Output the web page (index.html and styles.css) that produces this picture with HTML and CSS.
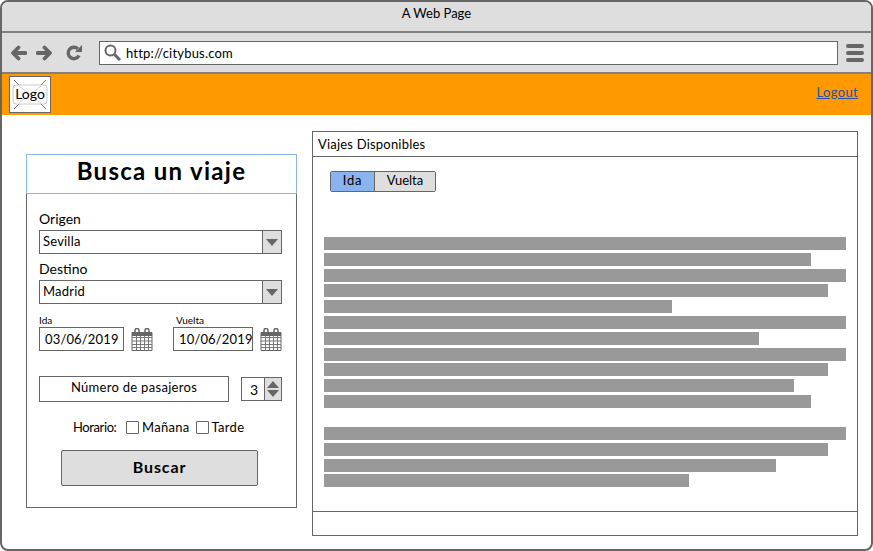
FILE: index.html
```html
<!DOCTYPE html>
<html lang="es">
<head>
  <meta charset="UTF-8" />
  <title>A Web Page</title>
  <link rel="stylesheet" href="styles.css">
</head>
<body>
  <div class="window">
    <div class="titlebar">A Web Page</div>
    <div class="toolbar">
      <svg class="nav-icon" width="16" height="16" viewBox="0 0 16 16"><path d="M7.500 2.500 2 8l5.500 5.500M2.500 8h12" fill="none" stroke="#666" stroke-width="3.800" stroke-linecap="round" stroke-linejoin="round"/></svg>
      <svg class="nav-icon" width="16" height="16" viewBox="0 0 16 16"><path d="M8.500 2.500 14 8l-5.500 5.500M13.500 8h-12" fill="none" stroke="#666" stroke-width="3.800" stroke-linecap="round" stroke-linejoin="round"/></svg>
      <svg class="nav-icon reload" width="16" height="16" viewBox="0 0 16 16"><path d="M13 10.500A5.700 5.700 0 1 1 11.800 3.800" fill="none" stroke="#666" stroke-width="3.400"/><path d="M9 7h7V0z" fill="#666"/></svg>
      <div class="address">
        <svg width="17" height="17" viewBox="0 0 17 17"><circle cx="6.500" cy="6.500" r="5" fill="none" stroke="#666" stroke-width="2"/><path d="M10.500 10.500 16 16" stroke="#666" stroke-width="3"/></svg>
        <span>http://citybus.com</span>
      </div>
      <div class="burger"><i></i><i></i><i></i></div>
    </div>
    <header class="topbar">
      <div class="logo">
        <svg class="logo-x" width="40" height="35" viewBox="0 0 40 35"><rect x="3" y="8" width="34" height="19" rx="3" fill="none" stroke="#ccc"/><path d="M9 9 31 26M31 9 9 26" stroke="#ccc"/><path d="M4 3 9 8M36 3 31 8M4 32 9 27M36 32 31 27" stroke="#777"/></svg>
        <span>Logo</span>
      </div>
      <a class="logout" href="#">Logout</a>
    </header>
    <main class="content">
      <section class="search">
        <h1>Busca un viaje</h1>
        <form class="search-form">
          <label class="field-label">Origen</label>
          <div class="select"><span>Sevilla</span><b></b></div>
          <label class="field-label second">Destino</label>
          <div class="select"><span>Madrid</span><b></b></div>
          <div class="dates">
            <div class="date">
              <small>Ida</small>
              <div class="date-row">
                <div class="date-input first">03/06/2019</div>
                <svg class="calendar" width="22" height="23" viewBox="0 0 22 23"><use href="#cal"/></svg>
              </div>
            </div>
            <div class="date">
              <small class="shifted">Vuelta</small>
              <div class="date-row">
                <div class="date-input">10/06/2019</div>
                <svg class="calendar" width="22" height="23" viewBox="0 0 22 23"><use href="#cal"/></svg>
              </div>
            </div>
          </div>
          <div class="passengers">
            <div class="passengers-label">Número de pasajeros</div>
            <div class="spinner"><span>3</span><b><i class="up"></i><i class="down"></i></b></div>
          </div>
          <div class="schedule">
            <span class="schedule-label">Horario:</span>
            <label><i class="check"></i>Mañana</label>
            <label><i class="check"></i>Tarde</label>
          </div>
          <button type="button" class="search-btn">Buscar</button>
        </form>
      </section>
      <section class="trips">
        <div class="trips-head">Viajes Disponibles</div>
        <div class="trips-body">
          <div class="tabs"><span class="tab active">Ida</span><span class="tab">Vuelta</span></div>
          <div class="lines">
            <p style="width:100%"></p><p style="width:93.300%"></p><p style="width:100%"></p><p style="width:96.600%"></p><p style="width:66.700%"></p><p style="width:100%"></p><p style="width:83.300%"></p><p style="width:100%"></p><p style="width:96.600%"></p><p style="width:90%"></p><p style="width:93.300%"></p>
          </div>
          <div class="lines">
            <p style="width:100%"></p><p style="width:96.600%"></p><p style="width:86.600%"></p><p style="width:70%"></p>
          </div>
        </div>
        <div class="trips-foot"></div>
      </section>
    </main>
  </div>
  <svg width="0" height="0" class="defs"><defs><g id="cal"><path d="M1 4.500h20v18H1z" fill="#fff" stroke="#666"/><path d="M1 9.500h20M1 13h20M1 16.500h20M1 19.500h20M5.500 4.500v18M9.500 4.500v18M13.500 4.500v18M17.500 4.500v18" stroke="#777" fill="none"/><path d="M4 6V2.500a2 2 0 0 1 4 0V6M14 6V2.500a2 2 0 0 1 4 0V6" fill="none" stroke="#666" stroke-width="1.500"/><path d="M1 6.500h20" stroke="#666" stroke-width="3"/></g></defs></svg>
</body>
</html>
```

FILE: styles.css
```css
* {
  box-sizing: border-box;
}

body {
  margin: 0;
  background-color: #fff;
  color: #000;
  font-family: "Lato", "Open Sans", sans-serif;
  font-size: 13px;
}

.defs {
  display: block;
  height: 0;
}

.window {
  width: 873px;
  height: 551px;
  border: 2px solid #666;
  border-radius: 8px;
  overflow: hidden;
}

.titlebar {
  height: 31px;
  background-color: #dedede;
  border-bottom: 2px solid #808080;
  text-align: center;
  font-size: 13px;
  line-height: 23px;
}

.toolbar {
  height: 41px;
  background-color: #dedede;
  border-bottom: 2px solid #808080;
  display: flex;
  align-items: center;
  padding: 0 4px 0 9px;
}

.nav-icon {
  margin-right: 9px;
}

.reload {
  margin-left: 5px;
  margin-right: 17px;
}

.address {
  width: 739px;
  height: 24px;
  background-color: #fff;
  border: 1px solid #666;
  display: flex;
  align-items: center;
  gap: 5px;
  padding-left: 4px;
  letter-spacing: 0.2px;
}

.burger {
  margin-left: 8px;
  width: 18px;
  display: flex;
  flex-direction: column;
  gap: 3px;
}

.burger i {
  display: block;
  height: 4px;
  background-color: #666;
  border-radius: 2px;
}

.topbar {
  height: 41px;
  margin: 0 -2px;
  padding: 2px 15px 0 9px;
  background-color: #f90;
  display: flex;
  justify-content: space-between;
  border-radius: 0 0 4px 4px;
}

.logo {
  position: relative;
  width: 42px;
  height: 37px;
  background-color: #fff;
  border: 1px solid #666;
  display: flex;
  align-items: center;
  justify-content: center;
  font-size: 14px;
  padding-bottom: 3px;
}

.logo-x {
  position: absolute;
  left: 0;
  top: 0;
}

.logo span {
  position: relative;
}

.logout {
  color: #2a4fa8;
  margin-top: 8px;
  letter-spacing: 0.35px;
}

.content {
  display: flex;
  padding: 16px 13px 0 24px;
  align-items: flex-start;
}

.search {
  width: 271px;
  margin-top: 23px;
  border: 1px solid #666;
  height: 354px;
}

.search h1 {
  margin: -1px -1px 0;
  height: 40px;
  border: 1px solid #8ab4ee;
  background-color: #fff;
  text-align: center;
  font-size: 24px;
  line-height: 32px;
  letter-spacing: 1.300px;
}

.search-form {
  padding: 16px 14px 0 12px;
}

.field-label {
  display: block;
  font-size: 14px;
  line-height: 17px;
  height: 20px;
}

.field-label.second {
  margin-top: 6px;
}

.select {
  height: 24px;
  border: 1px solid #666;
  display: flex;
  justify-content: space-between;
  align-items: center;
  padding-left: 3px;
  letter-spacing: 0.2px;
}

.select span {
  padding-bottom: 2px;
}

.select b {
  width: 19px;
  height: 22px;
  background-color: #dedede;
  border-left: 1px solid #666;
  position: relative;
}

.select b::after {
  content: "";
  position: absolute;
  left: 3px;
  top: 8px;
  border: 6px solid transparent;
  border-top: 7px solid #666;
  border-bottom: 0;
}

.dates {
  display: flex;
  gap: 20px;
  margin-top: 10px;
}

.date small {
  display: block;
  font-size: 10px;
  line-height: 13px;
}

.date small.shifted {
  padding-left: 3px;
}

.date-row {
  display: flex;
  align-items: center;
  gap: 7px;
}

.date-input {
  width: 80px;
  height: 24px;
  border: 1px solid #666;
  line-height: 22px;
  padding-left: 5px;
  font-size: 13px;
  letter-spacing: 0.15px;
  white-space: nowrap;
}

.date-input.first {
  width: 85px;
}

.passengers {
  display: flex;
  justify-content: space-between;
  align-items: center;
  margin-top: 25px;
}

.passengers-label {
  width: 190px;
  height: 26px;
  border: 1px solid #666;
  text-align: center;
  line-height: 21px;
  letter-spacing: 0.3px;
}

.spinner {
  width: 41px;
  height: 24px;
  border: 1px solid #666;
  display: flex;
  justify-content: space-between;
  align-items: center;
  padding-left: 8px;
  font-size: 14px;
}

.spinner b {
  width: 17px;
  height: 22px;
  background-color: #dedede;
  border-left: 1px solid #666;
  display: flex;
  flex-direction: column;
  align-items: center;
  justify-content: center;
  gap: 2px;
}

.spinner i {
  width: 0;
  height: 0;
  border: 6px solid transparent;
  border-top: 0;
  border-bottom: 7px solid #666;
}

.spinner i.down {
  border-top: 7px solid #666;
  border-bottom: 0;
}

.schedule {
  display: flex;
  align-items: center;
  margin-top: 17px;
  padding-left: 34px;
}

.schedule-label {
  width: 53px;
  letter-spacing: -0.4px;
}

.schedule label {
  display: flex;
  align-items: center;
  gap: 3px;
  margin-right: 6px;
  letter-spacing: 0.3px;
}

.check {
  width: 13px;
  height: 13px;
  border: 1px solid #666;
  border-radius: 1px;
  background-color: #fff;
}

.search-btn {
  display: block;
  width: 197px;
  height: 36px;
  margin: 15px 0 0 22px;
  padding: 0 0 4px;
  background-color: #dedede;
  border: 1px solid #666;
  border-radius: 2px;
  font-family: inherit;
  font-size: 16px;
  font-weight: bold;
  letter-spacing: 0.9px;
  color: #000;
}

.trips {
  width: 546px;
  height: 405px;
  margin-left: 15px;
  border: 1px solid #666;
  display: flex;
  flex-direction: column;
}

.trips-head {
  height: 25px;
  border-bottom: 1px solid #666;
  padding-left: 5px;
  line-height: 24px;
  letter-spacing: 0.2px;
}

.trips-body {
  flex: 1;
  padding: 14px 11px 0;
}

.tabs {
  display: flex;
  width: 106px;
  margin-left: 6px;
  height: 21px;
  border: 1px solid #666;
  border-radius: 2px;
  margin-bottom: 45px;
}

.tab {
  flex: 1;
  text-align: center;
  background-color: #dedede;
  line-height: 17px;
}

.tab.active {
  flex: none;
  width: 44px;
  background-color: #8ab4ee;
  border-right: 1px solid #666;
  letter-spacing: 0.8px;
}

.lines {
  margin-bottom: 19px;
}

.lines p {
  height: 13px;
  margin: 0 0 2.800px;
  background-color: #999;
}

.trips-foot {
  height: 24px;
  border-top: 1px solid #666;
}
```
